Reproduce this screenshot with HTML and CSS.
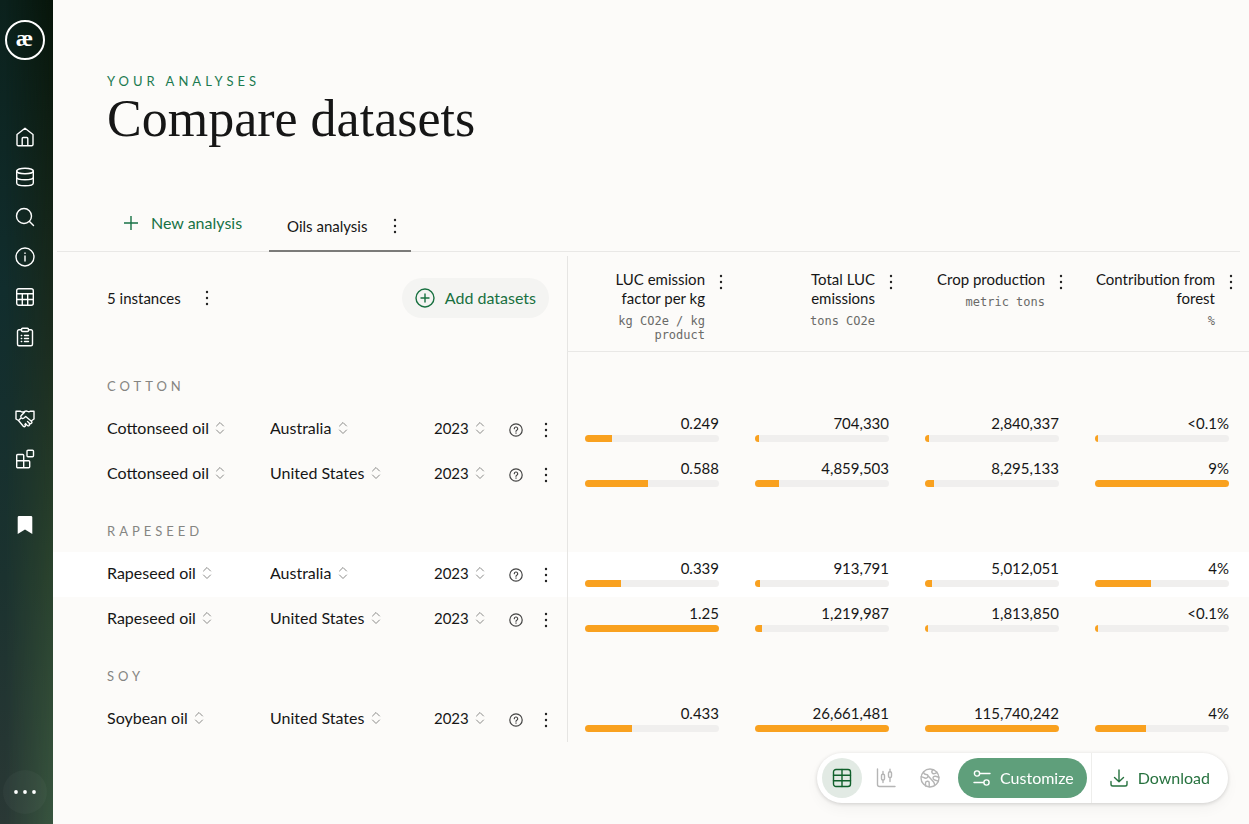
FILE: index.html
```html
<!DOCTYPE html>
<html lang="en">
<head>
	<title>Compare datasets</title>
	<meta charset="UTF-8">
	<meta name="viewport" content="width=device-width, initial-scale=1.0">
	<link rel="stylesheet" href="styles.css">
</head>
<body>
	<!-- shared icons -->
	<svg class="sprite" aria-hidden="true">
		<symbol id="dots" viewBox="0 0 4 16"><circle cx="2" cy="2" r="1.2"/><circle cx="2" cy="8" r="1.2"/><circle cx="2" cy="14" r="1.2"/></symbol>
		<symbol id="updown" viewBox="0 0 10 14"><path d="M1.5 5 5 1.5 8.5 5M1.5 9 5 12.5 8.5 9"/></symbol>
		<symbol id="help" viewBox="0 0 14 14"><circle cx="7" cy="7" r="6.2"/><path d="M5.3 5.7a1.7 1.7 0 1 1 2.5 1.5q-.8.4-.8 1.1M7 9.9v.3"/></symbol>
	</svg>

	<aside class="sidebar">
		<a class="logo" href="#">æ</a>
		<nav>
			<a href="#" aria-label="Home"><svg viewBox="0 0 20 20"><path d="M2 7.5 10 1.2l8 6.3v10a1.2 1.2 0 0 1-1.2 1.2H3.2A1.2 1.2 0 0 1 2 17.5zM7.2 18.5v-7a1 1 0 0 1 1-1h3.6a1 1 0 0 1 1 1v7"/></svg></a>
			<a href="#" aria-label="Datasets"><svg viewBox="0 0 20 20"><ellipse cx="10" cy="4" rx="8.3" ry="2.8"/><path d="M1.7 4v12c0 1.6 3.7 2.8 8.3 2.8s8.3-1.2 8.3-2.8V4M1.7 10c0 1.6 3.7 2.8 8.3 2.8s8.3-1.2 8.3-2.8"/></svg></a>
			<a href="#" aria-label="Search"><svg viewBox="0 0 20 20"><circle cx="9" cy="9" r="7.5"/><path d="m14.5 14.5 4 4"/></svg></a>
			<a href="#" aria-label="Info"><svg viewBox="0 0 20 20"><circle cx="10" cy="10" r="9"/><path d="M10 9v5M10 6v.4"/></svg></a>
			<a href="#" aria-label="Tables"><svg viewBox="0 0 20 20"><rect x="1.7" y="1.7" width="16.6" height="16.6" rx="2"/><path d="M2 6.8h16M2 12.5h16M7.3 6.8v11.5M12.7 6.8v11.5"/></svg></a>
			<a href="#" aria-label="Reports"><svg viewBox="0 0 20 20"><path d="M6.5 2.7H4A1.5 1.5 0 0 0 2.5 4.2v13A1.5 1.5 0 0 0 4 18.7h12a1.5 1.5 0 0 0 1.5-1.5v-13A1.5 1.5 0 0 0 16 2.7h-2.5"/><rect x="6.5" y="1.2" width="7" height="3.3" rx="1"/><path d="M9.5 8.5h4M9.5 11.5h4M9.5 14.5h4M6.3 8.5h.4M6.3 11.5h.4M6.3 14.5h.4"/></svg></a>
		</nav>
		<nav class="partners">
			<a href="#" aria-label="Partners"><svg viewBox="0 0 20 20"><path d="M1 2.2h4.5q1 .8 2 .8t2.2-.6q1.600-.8 3 .1 1.300.7 2.500-.3H19V10l-2.500 1.800M1 2.200V10l2.500 1.500 4.800 5.800q1 1 1.900 0 .5-.8-.3-1.700M9.500 3.200 6 6.800q-.7 1.200.4 2.200 1.200.9 2.500 0l1.800-1.500 5.700 4.800q1 1.200 0 2t-2.200-.2l-1.700-1.500M14.200 14.500q.8 1.300-.2 2.100-1 .7-2.200-.5l-1.400-1.500M3.500 11.500l2-2"/></svg></a>
			<a href="#" aria-label="Integrations"><svg viewBox="0 0 20 20"><path d="M2.7 5.5h5a1 1 0 0 1 1 1v5.200h5a1 1 0 0 1 1 1v5a1 1 0 0 1-1 1h-11a1 1 0 0 1-1-1v-11.200a1 1 0 0 1 1-1zM1.700 11.700h7v7"/><rect x="12" y="1.2" width="6.5" height="6.5" rx="1"/></svg></a>
		</nav>
		<nav class="saved">
			<a href="#" aria-label="Saved"><svg viewBox="0 0 20 20"><path class="solid" d="M4 1h12a1.3 1.3 0 0 1 1.3 1.3V19L10 14.5 2.7 19V2.3A1.3 1.3 0 0 1 4 1z"/></svg></a>
		</nav>
		<button class="more" type="button" aria-label="More"><svg viewBox="0 0 22 4"><circle cx="2" cy="2" r="1.9"/><circle cx="11" cy="2" r="1.9"/><circle cx="20" cy="2" r="1.9"/></svg></button>
	</aside>

	<main>
		<header>
			<p class="eyebrow">Your analyses</p>
			<h1>Compare datasets</h1>
		</header>

		<div class="tabs">
			<button class="new" type="button"><svg viewBox="0 0 14 14"><path d="M7 0v14M0 7h14"/></svg>New analysis</button>
			<div class="tab">
				<a href="#">Oils analysis</a>
				<button class="menu" type="button" aria-label="Analysis menu"><svg><use href="#dots"/></svg></button>
			</div>
		</div>

		<table>
			<colgroup>
				<col><col class="country"><col class="year"><col class="info"><col class="actions">
				<col class="metric"><col class="metric"><col class="metric"><col class="metric-last">
			</colgroup>
			<thead>
				<tr>
					<th class="first" colspan="5">
						<div class="instances">
							<span>5 instances</span>
							<button class="menu" type="button" aria-label="Instances menu"><svg><use href="#dots"/></svg></button>
							<button class="add" type="button"><svg viewBox="0 0 20 20"><circle cx="10" cy="10" r="9"/><path d="M10 6v8M6 10h8"/></svg>Add datasets</button>
						</div>
					</th>
					<th class="metric">
						<div class="head">
							<div>LUC emission factor per kg<small>kg CO2e / kg product</small></div>
							<button class="menu" type="button" aria-label="Column menu"><svg><use href="#dots"/></svg></button>
						</div>
					</th>
					<th class="metric">
						<div class="head">
							<div>Total LUC emissions<small>tons CO2e</small></div>
							<button class="menu" type="button" aria-label="Column menu"><svg><use href="#dots"/></svg></button>
						</div>
					</th>
					<th class="metric">
						<div class="head">
							<div>Crop production<small>metric tons</small></div>
							<button class="menu" type="button" aria-label="Column menu"><svg><use href="#dots"/></svg></button>
						</div>
					</th>
					<th class="metric">
						<div class="head">
							<div>Contribution from forest<small>%</small></div>
							<button class="menu" type="button" aria-label="Column menu"><svg><use href="#dots"/></svg></button>
						</div>
					</th>
				</tr>
			</thead>
			<tbody>
				<tr class="group"><th class="first" colspan="5">Cotton</th><td class="value" colspan="4"></td></tr>
				<tr>
					<td class="first"><label class="picker"><select aria-label="Product"><option>Cottonseed oil</option></select><svg><use href="#updown"/></svg></label></td>
					<td><label class="picker"><select aria-label="Country"><option>Australia</option></select><svg><use href="#updown"/></svg></label></td>
					<td><label class="picker year"><select aria-label="Year"><option>2023</option></select><svg><use href="#updown"/></svg></label></td>
					<td><button class="help" type="button" aria-label="Help"><svg><use href="#help"/></svg></button></td>
					<td><button class="menu" type="button" aria-label="Row menu"><svg><use href="#dots"/></svg></button></td>
					<td class="value">0.249<div class="bar"><i style="width:20%"></i></div></td>
					<td class="value">704,330<div class="bar"><i style="width:3%"></i></div></td>
					<td class="value">2,840,337<div class="bar"><i style="width:3%"></i></div></td>
					<td class="value">&lt;0.1%<div class="bar"><i style="width:2%"></i></div></td>
				</tr>
				<tr>
					<td class="first"><label class="picker"><select aria-label="Product"><option>Cottonseed oil</option></select><svg><use href="#updown"/></svg></label></td>
					<td><label class="picker"><select aria-label="Country"><option>United States</option></select><svg><use href="#updown"/></svg></label></td>
					<td><label class="picker year"><select aria-label="Year"><option>2023</option></select><svg><use href="#updown"/></svg></label></td>
					<td><button class="help" type="button" aria-label="Help"><svg><use href="#help"/></svg></button></td>
					<td><button class="menu" type="button" aria-label="Row menu"><svg><use href="#dots"/></svg></button></td>
					<td class="value">0.588<div class="bar"><i style="width:47%"></i></div></td>
					<td class="value">4,859,503<div class="bar"><i style="width:18%"></i></div></td>
					<td class="value">8,295,133<div class="bar"><i style="width:7%"></i></div></td>
					<td class="value">9%<div class="bar"><i style="width:100%"></i></div></td>
				</tr>
				<tr class="group"><th class="first" colspan="5">Rapeseed</th><td class="value" colspan="4"></td></tr>
				<tr class="active">
					<td class="first"><label class="picker"><select aria-label="Product"><option>Rapeseed oil</option></select><svg><use href="#updown"/></svg></label></td>
					<td><label class="picker"><select aria-label="Country"><option>Australia</option></select><svg><use href="#updown"/></svg></label></td>
					<td><label class="picker year"><select aria-label="Year"><option>2023</option></select><svg><use href="#updown"/></svg></label></td>
					<td><button class="help" type="button" aria-label="Help"><svg><use href="#help"/></svg></button></td>
					<td><button class="menu" type="button" aria-label="Row menu"><svg><use href="#dots"/></svg></button></td>
					<td class="value">0.339<div class="bar"><i style="width:27%"></i></div></td>
					<td class="value">913,791<div class="bar"><i style="width:4%"></i></div></td>
					<td class="value">5,012,051<div class="bar"><i style="width:5%"></i></div></td>
					<td class="value">4%<div class="bar"><i style="width:42%"></i></div></td>
				</tr>
				<tr>
					<td class="first"><label class="picker"><select aria-label="Product"><option>Rapeseed oil</option></select><svg><use href="#updown"/></svg></label></td>
					<td><label class="picker"><select aria-label="Country"><option>United States</option></select><svg><use href="#updown"/></svg></label></td>
					<td><label class="picker year"><select aria-label="Year"><option>2023</option></select><svg><use href="#updown"/></svg></label></td>
					<td><button class="help" type="button" aria-label="Help"><svg><use href="#help"/></svg></button></td>
					<td><button class="menu" type="button" aria-label="Row menu"><svg><use href="#dots"/></svg></button></td>
					<td class="value">1.25<div class="bar"><i style="width:100%"></i></div></td>
					<td class="value">1,219,987<div class="bar"><i style="width:5%"></i></div></td>
					<td class="value">1,813,850<div class="bar"><i style="width:2%"></i></div></td>
					<td class="value">&lt;0.1%<div class="bar"><i style="width:2%"></i></div></td>
				</tr>
				<tr class="group"><th class="first" colspan="5">Soy</th><td class="value" colspan="4"></td></tr>
				<tr>
					<td class="first"><label class="picker"><select aria-label="Product"><option>Soybean oil</option></select><svg><use href="#updown"/></svg></label></td>
					<td><label class="picker"><select aria-label="Country"><option>United States</option></select><svg><use href="#updown"/></svg></label></td>
					<td><label class="picker year"><select aria-label="Year"><option>2023</option></select><svg><use href="#updown"/></svg></label></td>
					<td><button class="help" type="button" aria-label="Help"><svg><use href="#help"/></svg></button></td>
					<td><button class="menu" type="button" aria-label="Row menu"><svg><use href="#dots"/></svg></button></td>
					<td class="value">0.433<div class="bar"><i style="width:35%"></i></div></td>
					<td class="value">26,661,481<div class="bar"><i style="width:100%"></i></div></td>
					<td class="value">115,740,242<div class="bar"><i style="width:100%"></i></div></td>
					<td class="value">4%<div class="bar"><i style="width:38%"></i></div></td>
				</tr>
			</tbody>
		</table>
	</main>

	<div class="toolbar">
		<button class="view selected" type="button" aria-label="Table view"><svg viewBox="0 0 20 20"><rect x="1.5" y="1.5" width="17" height="17" rx="2.5"/><path d="M1.5 7.2h17M1.5 12.8h17M10 1.5v17"/></svg></button>
		<button class="view" type="button" aria-label="Chart view"><svg viewBox="0 0 20 20"><path d="M1.5 1v15.5a2 2 0 0 0 2 2H19M7 3.5v2.8M7 12v2.5M14 1.2v2.5M14 9.5v4"/><rect x="5.5" y="6.3" width="3" height="5.7" rx="1.3"/><rect x="12.5" y="3.7" width="3" height="5.8" rx="1.3"/></svg></button>
		<button class="view" type="button" aria-label="Map view"><svg viewBox="0 0 20 20"><circle cx="10" cy="10" r="9"/><path d="M3.5 4.200q.5 2.300 2.700 2.300 1.800 0 1.800 1.600 0 1.500-1.500 2-1.500.3-2.500-.5l-2.800-1M5.500 18v-3q0-1.500 1.800-1.700 1.900-.2 1.900 1.700v3.800M13.500 1.700q-2.300 1.300-1.500 3 .8 1.500 2.500 1 1.500-.6 2.500-1.500M18.900 9.200l-3.400-.9q-2.300-.3-2.500 1.500 0 1.700 1.700 2.200l3.600 1.200M7.800 7.500l5.800 6.500q1.200 1.500 1 3.600"/></svg></button>
		<button class="customize" type="button"><svg viewBox="0 0 18 18"><circle cx="4" cy="4.5" r="2.6"/><path d="M6.7 4.5H17M1 13.5h9.500"/><circle cx="13.5" cy="13.5" r="2.6"/></svg>Customize</button>
		<button class="download" type="button"><svg viewBox="0 0 18 18"><path d="M9 1v11.500M4.500 8.500 9 12.700l4.500-4.200M1 12.500v2.700A1.800 1.800 0 0 0 2.800 17h12.400a1.800 1.800 0 0 0 1.800-1.800v-2.700"/></svg>Download</button>
	</div>
</body>
</html>
```

FILE: styles.css
```css
* {
	box-sizing: border-box;
}

body {
	margin: 0;
	display: flex;
	background-color: #fcfbf9;
	color: #161616;
	font-family: Lato, sans-serif;
	font-size: 15px;
	line-height: 20px;
}

button, select {
	font: inherit;
	color: inherit;
	background: none;
	border: 0;
	padding: 0;
	margin: 0;
	cursor: pointer;
}

a {
	color: inherit;
	text-decoration: none;
}

svg {
	display: block;
	flex: none;
	fill: none;
	stroke: currentColor;
	stroke-linecap: round;
	stroke-linejoin: round;
}

.sprite {
	position: absolute;
	width: 0;
	height: 0;
}

/* sidebar */

.sidebar {
	position: sticky;
	top: 0;
	z-index: 1;
	flex: none;
	display: flex;
	flex-direction: column;
	align-items: center;
	width: 53px;
	height: 100vh;
	padding: 20px 4px 10px 0;
	background: linear-gradient(#07150a, #1b2c1e 40%, #2b432e 70%, #38553f);
	color: #fff;
}

.sidebar::before {
	content: "";
	position: absolute;
	inset: 0;
	z-index: -1;
	background: linear-gradient(#0b211c, #112d2d 35%, #1b322f 70%, #2a3835);
	-webkit-mask-image: linear-gradient(to right, #000 10%, transparent);
	mask-image: linear-gradient(to right, #000 10%, transparent);
}

.logo {
	width: 40px;
	height: 40px;
	border: 2px solid #fff;
	border-radius: 50%;
	font-family: "Liberation Serif", serif;
	font-size: 24px;
	font-weight: bold;
	line-height: 32px;
	text-align: center;
}

.sidebar nav {
	margin-top: 57px;
}

.sidebar .partners {
	margin-top: 42px;
}

.sidebar .saved {
	margin-top: 26px;
}

.sidebar nav a {
	display: flex;
	align-items: center;
	justify-content: center;
	width: 40px;
	height: 40px;
}

.sidebar nav svg {
	width: 20px;
	height: 20px;
	stroke-width: 1.4;
}

.sidebar .solid {
	fill: #fff;
	stroke: none;
}

.more {
	display: flex;
	align-items: center;
	justify-content: center;
	width: 44px;
	height: 44px;
	margin-top: auto;
	border-radius: 50%;
	background-color: rgba(255, 255, 255, 0.03);
}

.more svg {
	width: 22px;
	height: 4px;
	fill: #fff;
	stroke: none;
}

/* page header */

main {
	flex: 1;
	min-width: 0;
	padding: 71px 0 80px;
}

header {
	padding-left: 54px;
}

.eyebrow {
	margin: 0;
	color: #1b7a50;
	font-size: 13px;
	letter-spacing: 4px;
	text-transform: uppercase;
}

h1 {
	margin: 0;
	font-family: "Liberation Serif", serif;
	font-size: 52px;
	font-weight: normal;
	line-height: 56px;
}

.tabs {
	display: flex;
	gap: 27px;
	height: 50px;
	margin: 55px 9px 0 4px;
	padding-left: 67px;
	border-bottom: 1px solid #e9e8e6;
}

.new {
	display: flex;
	align-items: center;
	gap: 13px;
	height: 42px;
	color: #177245;
	font-size: 16px;
}

.new svg {
	width: 14px;
	height: 14px;
	stroke-width: 1.4;
}

.tab {
	display: flex;
	align-items: center;
	gap: 12px;
	height: 50px;
	padding-left: 18px;
	border-bottom: 2px solid #7b7b79;
}

.menu {
	display: flex;
	align-items: center;
	justify-content: center;
	width: 32px;
	height: 24px;
}

.menu svg {
	width: 4px;
	height: 16px;
	fill: #222;
	stroke: none;
}

/* table */

table {
	width: 100%;
	margin-top: 4px;
	table-layout: fixed;
	border-spacing: 0;
}

th, td {
	padding: 0;
	font-weight: normal;
	text-align: left;
}

col.country { width: 164px; }
col.year { width: 72px; }
col.info { width: 20px; }
col.actions { width: 41px; }
col.metric { width: 170px; }
col.metric-last { width: 172px; }

th.first, td.first {
	padding-left: 54px;
}

thead tr {
	height: 96px;
}

thead th {
	vertical-align: top;
}

thead th.metric {
	border-bottom: 1px solid #e9e8e6;
}

th.first + th, th.first + td, td:nth-child(6) {
	border-left: 1px solid #e6e5e3;
}

.instances {
	display: flex;
	align-items: center;
	padding: 22px 18px 0 0;
}

.instances .menu {
	margin-left: 10px;
}

.add {
	display: flex;
	align-items: center;
	gap: 10px;
	height: 40px;
	margin-left: auto;
	padding: 0 13px;
	border-radius: 20px;
	background-color: #f4f4f2;
	color: #187040;
	font-size: 16px;
}

.add svg {
	width: 20px;
	height: 20px;
	stroke-width: 1.4;
}

.head {
	display: flex;
	align-items: flex-start;
	padding: 14px 0 0 12px;
	line-height: 19px;
	text-align: right;
}

.head > div {
	flex: 1;
}

th:last-child .head {
	padding-right: 2px;
}

small {
	display: block;
	margin-top: 6px;
	color: #6a6a68;
	font-family: "DejaVu Sans Mono", monospace;
	font-size: 12px;
	line-height: 14px;
}

tbody tr {
	height: 45px;
}

tr.active {
	background-color: #fff;
}

tr.group {
	height: 55px;
}

.group th {
	padding-bottom: 11px;
	vertical-align: bottom;
	color: #858582;
	font-size: 13px;
	letter-spacing: 4px;
	text-transform: uppercase;
}

.picker {
	display: flex;
	align-items: center;
	gap: 6px;
	width: max-content;
	padding-bottom: 3px;
	font-size: 16px;
}

.picker.year {
	font-size: 15px;
}

.picker select {
	appearance: none;
	-webkit-appearance: none;
}

.picker svg {
	width: 10px;
	height: 14px;
	color: #8b8b89;
}

.help {
	display: flex;
	width: 20px;
	height: 20px;
	align-items: center;
	justify-content: center;
}

.help svg {
	width: 14px;
	height: 14px;
	color: #444;
	stroke-width: 1.2;
}

td .menu {
	width: 40px;
}

td.value {
	padding: 0 18px 10px;
	vertical-align: bottom;
	text-align: right;
}

td.value:nth-child(6) {
	padding-left: 17px;
}

td.value:nth-child(9) {
	padding-right: 20px;
}

.bar {
	height: 7px;
	margin-top: 2px;
	overflow: hidden;
	border-radius: 4px;
	background-color: #f0efee;
}

.bar i {
	display: block;
	height: 100%;
	background-color: #f9a11f;
}

/* floating toolbar */

.toolbar {
	position: fixed;
	right: 21px;
	bottom: 21px;
	display: flex;
	align-items: center;
	gap: 4px;
	height: 50px;
	padding-left: 5px;
	border-radius: 25px;
	background-color: #fff;
	box-shadow: 0 1px 4px rgba(0, 0, 0, 0.16), 0 6px 14px rgba(0, 0, 0, 0.04);
	font-size: 16px;
}

.toolbar button {
	display: flex;
	align-items: center;
	justify-content: center;
	height: 40px;
}

.view {
	width: 40px;
	border-radius: 50%;
	color: #b5b5b5;
}

.view.selected {
	background-color: #e2eae4;
	color: #11602c;
}

.view svg {
	width: 20px;
	height: 20px;
	stroke-width: 1.4;
}

.toolbar .customize {
	gap: 9px;
	margin-left: 4px;
	padding: 0 13px 0 15px;
	border-radius: 20px;
	background-color: #5f9f7b;
	color: #fff;
}

.toolbar .download {
	gap: 10px;
	height: 50px;
	padding: 0 18px;
	border-left: 1px solid #eeeeec;
	color: #27723f;
}

.customize svg, .download svg {
	width: 18px;
	height: 18px;
	stroke-width: 1.4;
}
```
